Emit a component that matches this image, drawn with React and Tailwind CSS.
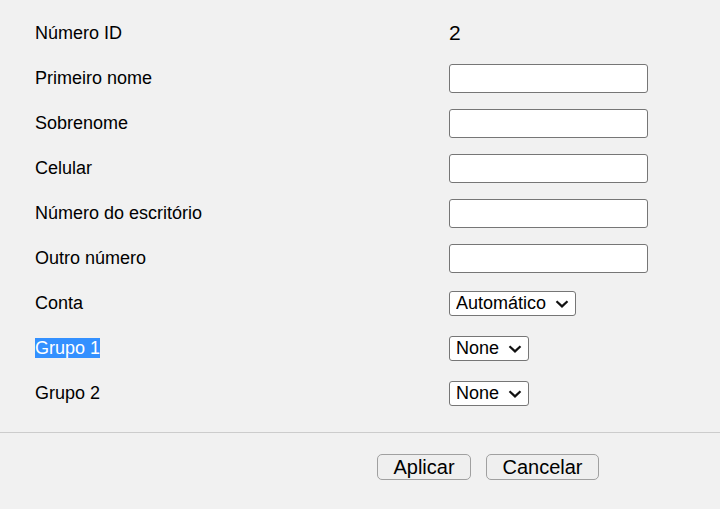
import React from 'react';

const Chevron = () => (
  <svg
    className="pointer-events-none absolute right-[7px] top-1/2 -translate-y-1/2"
    width="14"
    height="8"
    viewBox="0 0 14 8"
    fill="none"
  >
    <path d="M1.5 1.2 L7 6.4 L12.5 1.2" stroke="#111" strokeWidth="2.2" />
  </svg>
);

const Select = ({ value, options, width }) => (
  <div className={`relative ${width}`}>
    <select
      defaultValue={value}
      className="h-[25px] w-full appearance-none rounded-[3px] border border-[#767676] bg-white pl-[6px] pr-[28px] text-[18px] leading-[23px] text-black outline-none"
    >
      {options.map((o) => (
        <option key={o}>{o}</option>
      ))}
    </select>
    <Chevron />
  </div>
);

const TextInput = () => (
  <input
    type="text"
    className="h-[29px] w-[199px] rounded-[3px] border border-[#767676] bg-white px-[4px] text-[18px] outline-none"
  />
);

const rows = [
  { label: 'Número ID', control: <span className="pb-[2px] text-[21px] leading-none">2</span> },
  { label: 'Primeiro nome', control: <TextInput /> },
  { label: 'Sobrenome', control: <TextInput /> },
  { label: 'Celular', control: <TextInput /> },
  { label: 'Número do escritório', control: <TextInput /> },
  { label: 'Outro número', control: <TextInput /> },
  {
    label: 'Conta',
    control: <Select value="Automático" options={['Automático', 'Manual']} width="w-[127px]" />,
  },
  {
    label: 'Grupo 1',
    selected: true,
    control: <Select value="None" options={['None', 'A', 'B']} width="w-[80px]" />,
  },
  {
    label: 'Grupo 2',
    control: <Select value="None" options={['None', 'A', 'B']} width="w-[80px]" />,
  },
];

export default function App() {
  return (
    <div
      className="flex h-[509px] w-[720px] flex-col bg-[#f1f1f1] text-black"
      style={{ fontFamily: '"Liberation Sans", Arial, sans-serif' }}
    >
      <div className="flex flex-col pl-[35px] pt-[11px]">
        {rows.map((r) => (
          <div key={r.label} className="grid h-[45px] grid-cols-[414px_1fr] items-center">
            <div className="pb-[2px] text-[18px] leading-[20px]">
              {r.selected ? (
                <span className="bg-[#3390ff] text-white">{r.label}</span>
              ) : (
                r.label
              )}
            </div>
            <div className="flex items-center">{r.control}</div>
          </div>
        ))}
      </div>

      <div className="mt-[16px] border-t border-[#cccccc]" />

      <div className="flex gap-[15px] pt-[21px] pl-[377px]">
        <button className="h-[26px] w-[94px] rounded-[5px] border border-[#a0a0a0] bg-[#efefef] text-[20px] leading-none text-black">
          Aplicar
        </button>
        <button className="h-[26px] w-[113px] rounded-[5px] border border-[#a0a0a0] bg-[#efefef] text-[20px] leading-none text-black">
          Cancelar
        </button>
      </div>
    </div>
  );
}
